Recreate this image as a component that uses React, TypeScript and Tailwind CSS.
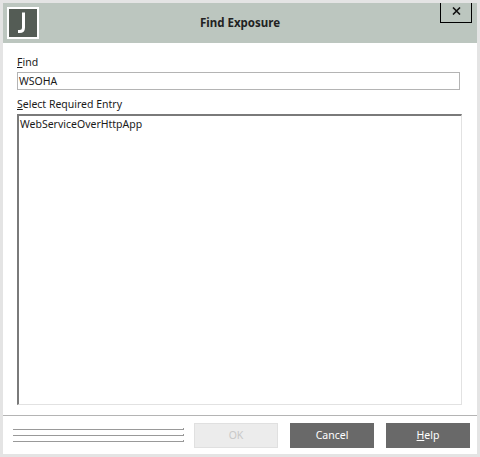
export default function App() {
  return (
    <div className="w-[480px] h-[457px] bg-white border-[3px] border-[#e4e4e4] flex flex-col relative overflow-hidden text-[10.5px] text-[#1a1a1a] font-['Noto_Sans',sans-serif] box-border">
      <header className="h-[40px] shrink-0 bg-[#bcc6bf] flex items-center relative">
        <div className="ml-[4px] w-[32px] h-[32px] bg-[#545c55] border-2 border-white flex items-center justify-center">
          <svg width="28" height="28" viewBox="0 0 28 28">
            <path d="M14.5 3.5 V18.5 Q14.5 22.5 10.5 22.5 H9" stroke="#fff" strokeWidth="3" fill="none" />
          </svg>
        </div>
        <div className="flex-1 text-center font-bold text-[11.5px] text-[#222] pr-[36px]">Find Exposure</div>
        <button className="absolute right-[5px] top-[-3px] w-[32px] h-[23px] border border-black border-t-0 flex items-center justify-center">
          <svg width="9" height="8" viewBox="0 0 9 8"><path d="M1 0.5 L8 7.5 M8 0.5 L1 7.5" stroke="#111" strokeWidth="1.6" fill="none" /></svg>
        </button>
      </header>
      <main className="flex-1 flex flex-col pl-[14px] pr-[15px] pt-[12px]">
        <label className="h-[17px] leading-[14px]"><span className="underline">F</span>ind</label>
        <div className="h-[18px] w-[443px] border border-[#b4b4b4] flex items-center pl-[1px] leading-none">WSOHA</div>
        <label className="mt-[7px] h-[17px] leading-[14px]"><span className="underline">S</span>elect Required Entry</label>
        <div className="w-[445px] h-[291px] border border-[#e2e2e2] border-t-2 border-l-2 border-t-[#7a7a7a] border-l-[#7a7a7a] pl-[1px] pt-[1px] leading-[14px]">WebServiceOverHttpApp</div>
      </main>
      <footer className="h-[39px] shrink-0 border-t border-[#b4b4b4] flex items-center pl-[10px] pr-[7px]">
        <div className="w-[171px] flex flex-col gap-[4px] mr-[10px]">
          <div className="h-[2px] border-b border-r border-[#999]" />
          <div className="h-[2px] border-b border-r border-[#999]" />
          <div className="h-[2px] border-b border-r border-[#999]" />
        </div>
        <button className="w-[84px] h-[25px] pt-[1px] bg-[#ececec] border border-[#e0e0e0] text-[#c8c8c8]">OK</button>
        <button className="ml-[12px] w-[84px] h-[25px] pt-[1px] bg-[#696969] text-white">Cancel</button>
        <button className="ml-[12px] w-[84px] h-[25px] pt-[1px] bg-[#696969] text-white"><span className="underline">H</span>elp</button>
      </footer>
    </div>
  );
}
